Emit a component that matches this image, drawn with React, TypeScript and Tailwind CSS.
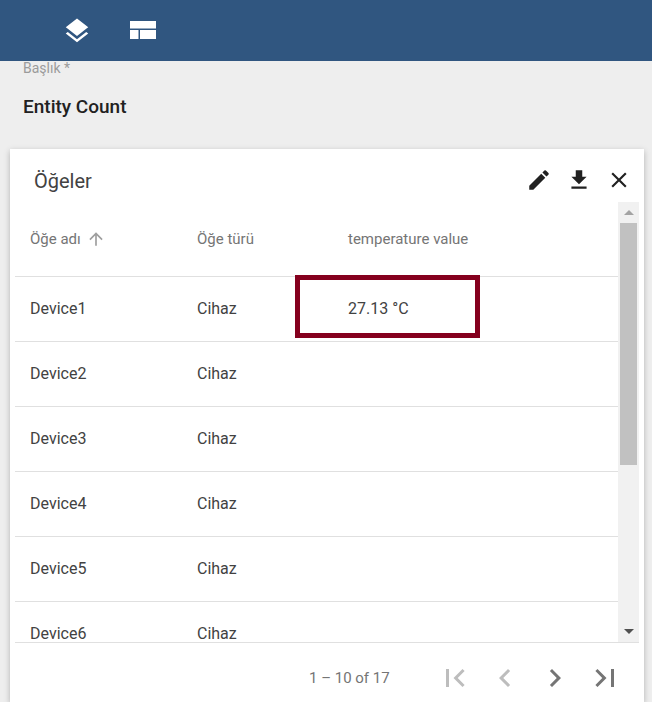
const rows = ["Device1", "Device2", "Device3", "Device4", "Device5", "Device6"];

const font = { fontFamily: "Roboto, sans-serif" };

function MatIcon({ d, size, className }: { d: string; size: number; className?: string }) {
  return (
    <svg width={size} height={size} viewBox="0 0 24 24" fill="currentColor" className={className}>
      <path d={d} />
    </svg>
  );
}

const icons = {
  layers:
    "M11.99 18.54l-7.37-5.73L3 14.07l9 7 9-7-1.63-1.27-7.38 5.74zM12 16l7.36-5.73L21 9l-9-7-9 7 1.63 1.27L12 16z",
  edit: "M3 17.25V21h3.75L17.81 9.94l-3.75-3.75L3 17.25zM20.71 7.04a1 1 0 0 0 0-1.41l-2.34-2.34a1 1 0 0 0-1.41 0l-1.83 1.83 3.75 3.75 1.83-1.83z",
  download: "M19 9h-4V3H9v6H5l7 7 7-7zM5 18v2h14v-2H5z",
  close:
    "M19 6.41L17.59 5 12 10.59 6.41 5 5 6.41 10.59 12 5 17.59 6.41 19 12 13.41 17.59 19 19 17.59 13.41 12 19 6.41z",
  first: "M18.41 16.59L13.82 12l4.59-4.59L17 6l-6 6 6 6zM6 6h2v12H6z",
  prev: "M15.41 7.41L14 6l-6 6 6 6 1.41-1.41L10.83 12z",
  next: "M10 6L8.59 7.41 13.17 12l-4.58 4.59L10 18l6-6z",
  last: "M5.59 7.41L10.18 12l-4.59 4.59L7 18l6-6-6-6zM16 6h2v12h-2z",
  up: "M4 12l1.41 1.41L11 7.83V20h2V7.83l5.58 5.59L20 12l-8-8-8 8z",
};

export default function App() {
  return (
    <div className="flex h-[702px] w-[652px] flex-col overflow-hidden bg-[#eeeeee]" style={font}>
      <header className="flex h-[61px] shrink-0 items-center bg-[#305680] pl-[62px] text-white">
        <MatIcon d={icons.layers} size={30} />
        <svg width="26" height="18" viewBox="0 0 26 18" fill="currentColor" className="ml-[38px] -mt-[1px]">
          <rect x="0" y="0" width="26" height="7.5" />
          <rect x="0" y="9" width="8.5" height="9" />
          <rect x="10" y="9" width="16" height="9" />
        </svg>
      </header>

      <div className="h-[88px] shrink-0 pl-[23px]">
        <div className="text-[14px] leading-[14px] text-[#9b9b9b]">Başlık *</div>
        <div className="mt-[20px] text-[19px] leading-[24px] font-medium text-[#212121]">Entity Count</div>
      </div>

      <section className="relative mr-[8px] ml-[10px] flex min-h-0 flex-1 flex-col bg-white shadow-[0_2px_6px_rgba(0,0,0,0.25)]">
        <div className="flex h-[53px] shrink-0 items-center justify-between pt-[9px] pr-[5px] pl-[24px]">
          <h2 className="mt-[2px] text-[20px] font-normal text-[#424242]">Öğeler</h2>
          <div className="flex items-center text-[#212121]">
            <div className="flex w-[40px] justify-center"><MatIcon d={icons.edit} size={26} /></div>
            <div className="flex w-[40px] justify-center"><MatIcon d={icons.download} size={26} /></div>
            <div className="flex w-[40px] justify-center"><MatIcon d={icons.close} size={26} /></div>
          </div>
        </div>

        <div className="mr-[5px] ml-[5px] flex h-[441px] shrink-0 border-b border-[#e0e0e0]">
          <div className="min-w-0 flex-1 overflow-hidden">
            <div className="flex h-[75px] items-center border-b border-[#e0e0e0] text-[15px] font-normal text-[#757575]">
              <div className="flex w-[182px] items-center pl-[15px]">
                Öğe adı
                <MatIcon d={icons.up} size={20} className="ml-[5px] text-[#9e9e9e]" />
              </div>
              <div className="w-[99px]">Öğe türü</div>
              <div className="pl-[52px]">temperature value</div>
            </div>
            {rows.map((name, i) => (
              <div key={name} className="flex h-[65px] items-center border-b border-[#e0e0e0] text-[16px] text-[#424242]">
                <div className="w-[182px] pl-[15px]">{name}</div>
                <div className="w-[99px]">Cihaz</div>
                {i === 0 && (
                  <div className="relative h-full w-[184px] pl-[52px] leading-[64px]">
                    27.13 °C
                    <div className="absolute -top-[2px] -left-[1px] h-[63px] w-[185px] border-[5px] border-[#85001e]" />
                  </div>
                )}
              </div>
            ))}
          </div>

          <div className="flex w-[21px] shrink-0 flex-col items-center bg-[#f1f1f1]">
            <div className="mt-[8px] h-0 w-0 border-x-[5px] border-b-[5px] border-x-transparent border-b-[#a3a3a3]" />
            <div className="mt-[8px] h-[242px] w-[17px] bg-[#c1c1c1]" />
            <div className="mt-auto mb-[8px] h-0 w-0 border-x-[5px] border-t-[5px] border-x-transparent border-t-[#505050]" />
          </div>
        </div>

        <div className="flex flex-1 items-center pt-[11px] pl-[299px] text-[#757575]">
          <span className="text-[15px]">1 – 10 of 17</span>
          <div className="ml-[40px] flex items-center">
            <div className="flex w-[50px] justify-center text-[#bdbdbd]"><MatIcon d={icons.first} size={36} /></div>
            <div className="flex w-[50px] justify-center text-[#bdbdbd]"><MatIcon d={icons.prev} size={36} /></div>
            <div className="flex w-[50px] justify-center"><MatIcon d={icons.next} size={36} /></div>
            <div className="flex w-[50px] justify-center"><MatIcon d={icons.last} size={36} /></div>
          </div>
        </div>
      </section>
    </div>
  );
}
